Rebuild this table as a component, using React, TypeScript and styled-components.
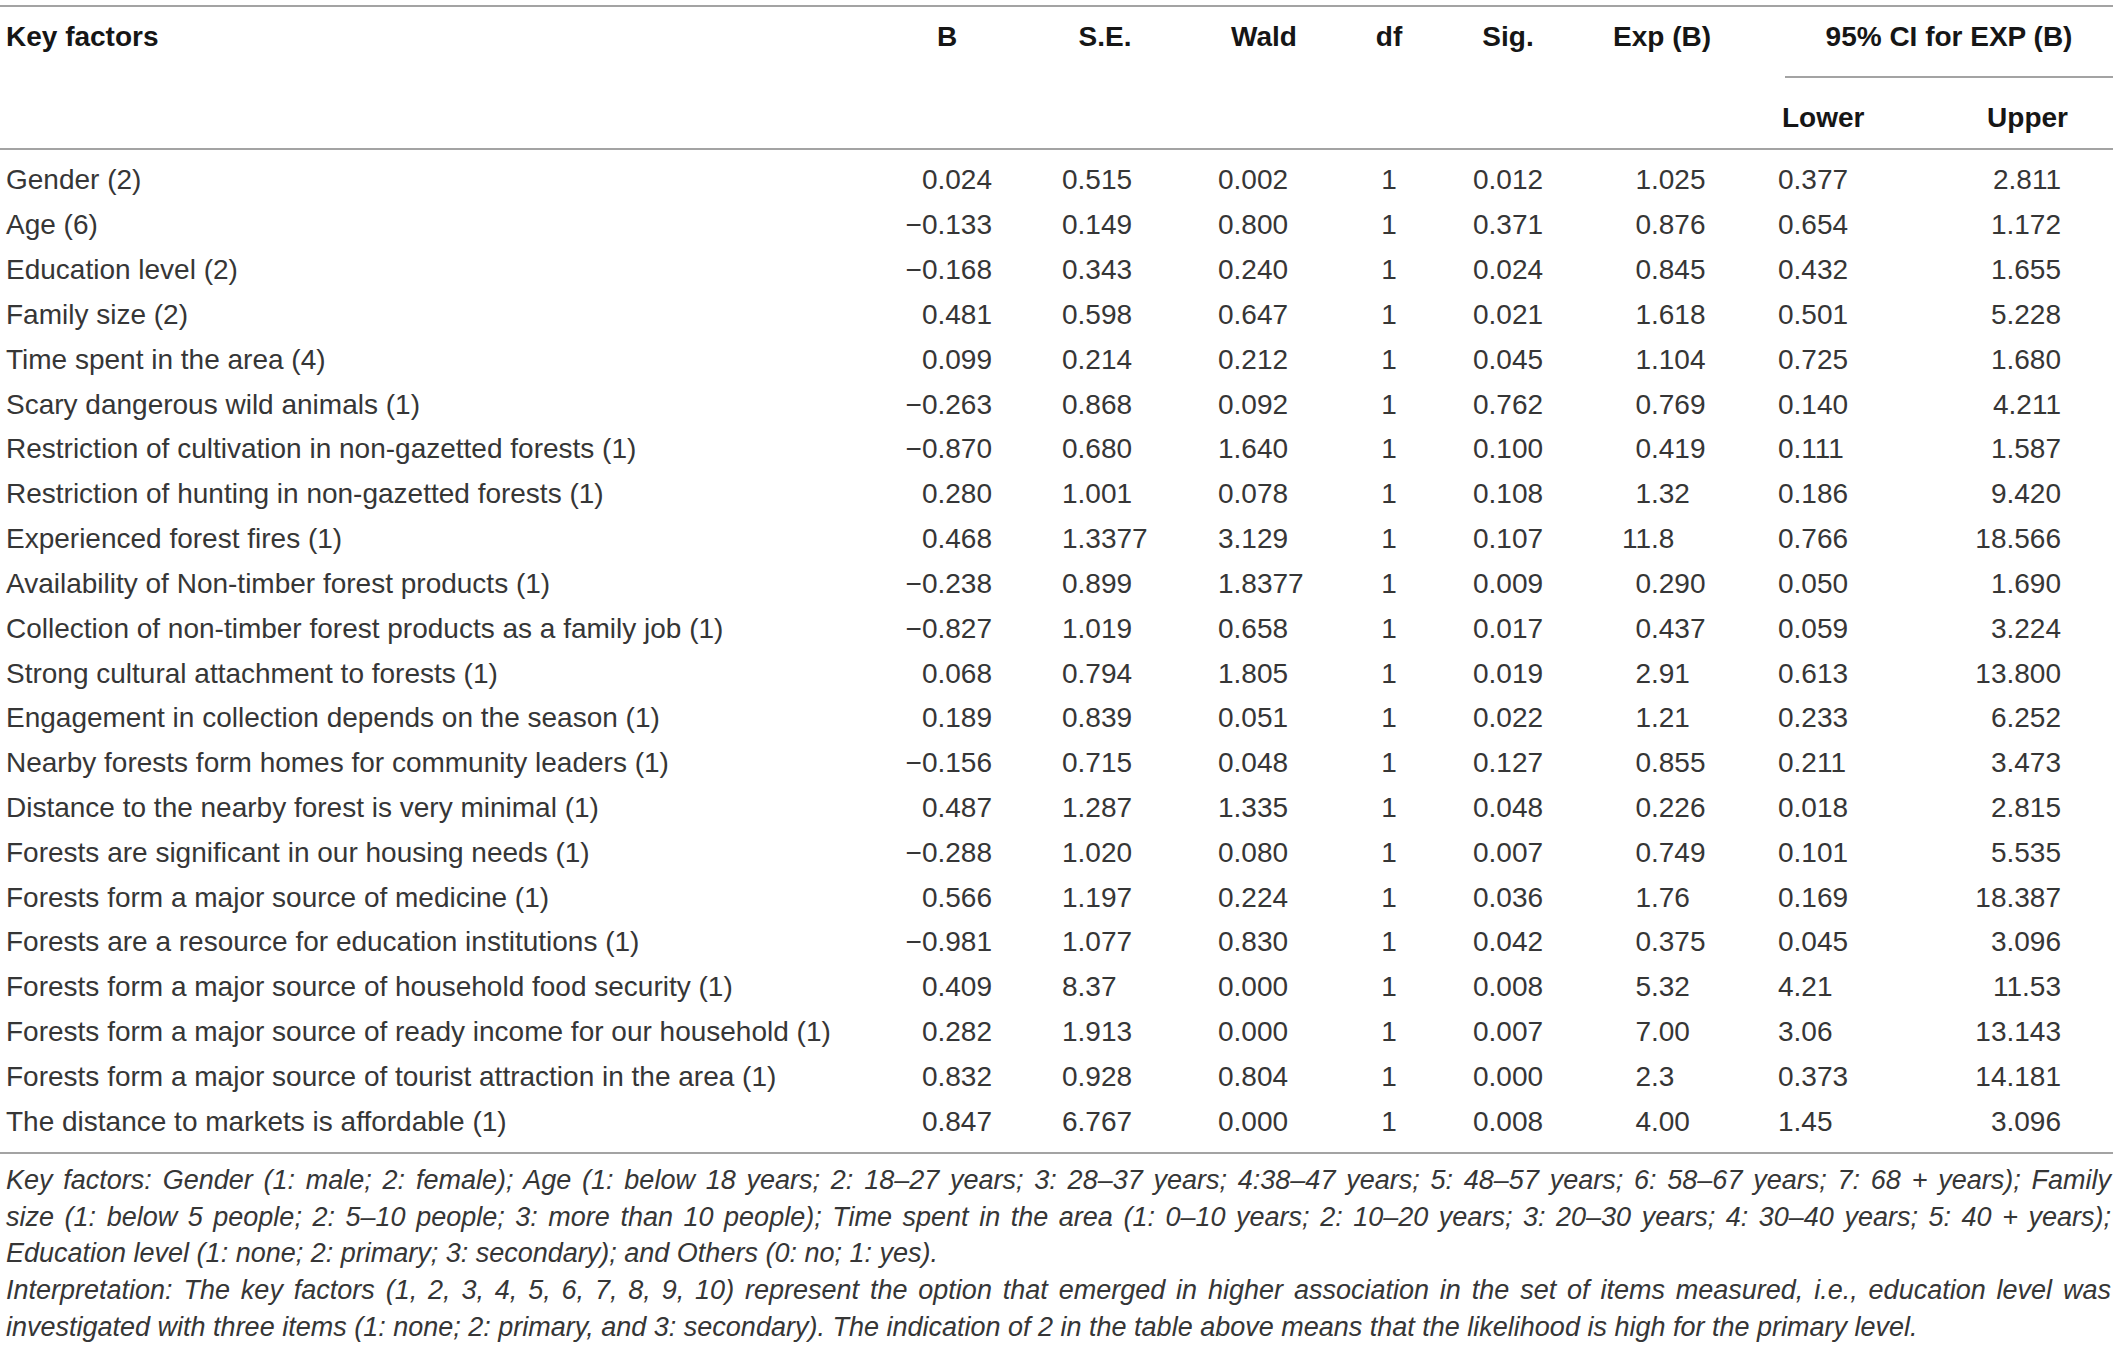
import styled, { createGlobalStyle } from 'styled-components';

const ruleColor = '#a3a3a3';

const GlobalStyle = createGlobalStyle`
  html, body {
    margin: 0;
    padding: 0;
    background: #ffffff;
  }
  body {
    font-family: 'Liberation Sans', Arial, sans-serif;
    color: #363636;
  }
`;

type Align = 'left' | 'right' | 'center' | 'decimal';

interface Column {
  width: number;
  align: Align;
  padL?: number;
  padR?: number;
  head?: string;
  headAlign?: 'left' | 'right' | 'center';
  headPadL?: number;
  headPadR?: number;
}

const columns: Column[] = [
  { width: 870, align: 'left', padL: 6, head: 'Key factors', headAlign: 'left', headPadL: 6 },
  { width: 154, align: 'right', padR: 32, head: 'B' },
  { width: 162, align: 'left', padL: 38, head: 'S.E.' },
  { width: 156, align: 'left', padL: 32, head: 'Wald' },
  { width: 94, align: 'center', head: 'df' },
  { width: 144, align: 'left', padL: 37, head: 'Sig.' },
  { width: 164, align: 'decimal', head: 'Exp (B)' },
  { width: 160, align: 'left', padL: 34 },
  { width: 209, align: 'right', padR: 52 },
];

const rows: string[][] = [
  ['Gender (2)', '0.024', '0.515', '0.002', '1', '0.012', '1.025', '0.377', '2.811'],
  ['Age (6)', '−0.133', '0.149', '0.800', '1', '0.371', '0.876', '0.654', '1.172'],
  ['Education level (2)', '−0.168', '0.343', '0.240', '1', '0.024', '0.845', '0.432', '1.655'],
  ['Family size (2)', '0.481', '0.598', '0.647', '1', '0.021', '1.618', '0.501', '5.228'],
  ['Time spent in the area (4)', '0.099', '0.214', '0.212', '1', '0.045', '1.104', '0.725', '1.680'],
  ['Scary dangerous wild animals (1)', '−0.263', '0.868', '0.092', '1', '0.762', '0.769', '0.140', '4.211'],
  ['Restriction of cultivation in non-gazetted forests (1)', '−0.870', '0.680', '1.640', '1', '0.100', '0.419', '0.111', '1.587'],
  ['Restriction of hunting in non-gazetted forests (1)', '0.280', '1.001', '0.078', '1', '0.108', '1.32', '0.186', '9.420'],
  ['Experienced forest fires (1)', '0.468', '1.3377', '3.129', '1', '0.107', '11.8', '0.766', '18.566'],
  ['Availability of Non-timber forest products (1)', '−0.238', '0.899', '1.8377', '1', '0.009', '0.290', '0.050', '1.690'],
  ['Collection of non-timber forest products as a family job (1)', '−0.827', '1.019', '0.658', '1', '0.017', '0.437', '0.059', '3.224'],
  ['Strong cultural attachment to forests (1)', '0.068', '0.794', '1.805', '1', '0.019', '2.91', '0.613', '13.800'],
  ['Engagement in collection depends on the season (1)', '0.189', '0.839', '0.051', '1', '0.022', '1.21', '0.233', '6.252'],
  ['Nearby forests form homes for community leaders (1)', '−0.156', '0.715', '0.048', '1', '0.127', '0.855', '0.211', '3.473'],
  ['Distance to the nearby forest is very minimal (1)', '0.487', '1.287', '1.335', '1', '0.048', '0.226', '0.018', '2.815'],
  ['Forests are significant in our housing needs (1)', '−0.288', '1.020', '0.080', '1', '0.007', '0.749', '0.101', '5.535'],
  ['Forests form a major source of medicine (1)', '0.566', '1.197', '0.224', '1', '0.036', '1.76', '0.169', '18.387'],
  ['Forests are a resource for education institutions (1)', '−0.981', '1.077', '0.830', '1', '0.042', '0.375', '0.045', '3.096'],
  ['Forests form a major source of household food security (1)', '0.409', '8.37', '0.000', '1', '0.008', '5.32', '4.21', '11.53'],
  ['Forests form a major source of ready income for our household (1)', '0.282', '1.913', '0.000', '1', '0.007', '7.00', '3.06', '13.143'],
  ['Forests form a major source of tourist attraction in the area (1)', '0.832', '0.928', '0.804', '1', '0.000', '2.3', '0.373', '14.181'],
  ['The distance to markets is affordable (1)', '0.847', '6.767', '0.000', '1', '0.008', '4.00', '1.45', '3.096'],
];

const notes: { text: string; last?: boolean }[] = [
  {
    text: 'Key factors: Gender (1: male; 2: female); Age (1: below 18 years; 2: 18–27 years; 3: 28–37 years; 4:38–47 years; 5: 48–57 years; 6: 58–67 years; 7: 68 + years); Family',
  },
  {
    text: 'size (1: below 5 people; 2: 5–10 people; 3: more than 10 people); Time spent in the area (1: 0–10 years; 2: 10–20 years; 3: 20–30 years; 4: 30–40 years; 5: 40 + years);',
  },
  { text: 'Education level (1: none; 2: primary; 3: secondary); and Others (0: no; 1: yes).', last: true },
  {
    text: 'Interpretation: The key factors (1, 2, 3, 4, 5, 6, 7, 8, 9, 10) represent the option that emerged in higher association in the set of items measured, i.e., education level was',
  },
  {
    text: 'investigated with three items (1: none; 2: primary, and 3: secondary). The indication of 2 in the table above means that the likelihood is high for the primary level.',
    last: true,
  },
];

const Page = styled.div`
  width: 2113px;
  padding-top: 5px;
`;

const Table = styled.table`
  width: 2113px;
  table-layout: fixed;
  border-collapse: separate;
  border-spacing: 0;
  border-top: 2px solid ${ruleColor};
  border-bottom: 2px solid ${ruleColor};
  font-size: 28px;
`;

const HeadCell = styled.th<{ $align: string; $padL?: number; $padR?: number }>`
  vertical-align: top;
  padding: 14px ${p => p.$padR ?? 0}px 0 ${p => p.$padL ?? 0}px;
  line-height: 32px;
  font-weight: 700;
  color: #161616;
  text-align: ${p => p.$align};
  white-space: nowrap;
  border-bottom: 2px solid ${ruleColor};
`;

const SubHeadCell = styled(HeadCell)`
  padding-top: 24px;
  padding-bottom: 14px;
`;

const SpanHeadCell = styled.th`
  vertical-align: top;
  padding: 0 0 0 41px;
  font-weight: 700;
  color: #161616;
  white-space: nowrap;
`;

const SpanTitle = styled.div`
  padding: 14px 0 23px;
  line-height: 32px;
  text-align: center;
  border-bottom: 2px solid ${ruleColor};
`;

const BodyRow = styled.tr`
  &:first-child td {
    height: 52.84px;
    padding-top: 8px;
  }
  &:last-child td {
    height: 52.84px;
    padding-bottom: 8px;
  }
`;

const BodyCell = styled.td<{ $align: string; $padL?: number; $padR?: number }>`
  box-sizing: border-box;
  height: 44.84px;
  padding: 0 ${p => p.$padR ?? 0}px 0 ${p => p.$padL ?? 0}px;
  vertical-align: middle;
  line-height: 32px;
  text-align: ${p => (p.$align === 'decimal' ? 'left' : p.$align)};
  white-space: nowrap;
`;

const IntPart = styled.span`
  display: inline-block;
  width: 71px;
  text-align: right;
`;

const Notes = styled.div`
  margin-top: 8px;
  padding: 0 2px 0 6px;
  font-size: 27px;
  font-style: italic;
  line-height: 36.6px;
`;

const NoteLine = styled.div<{ $last?: boolean }>`
  text-align: ${p => (p.$last ? 'left' : 'justify')};
  text-align-last: ${p => (p.$last ? 'left' : 'justify')};
`;

const renderValue = (value: string, align: Align) => {
  if (align !== 'decimal') return value;
  const dot = value.indexOf('.');
  return (
    <>
      <IntPart>{value.slice(0, dot)}</IntPart>
      {value.slice(dot)}
    </>
  );
};

export default function App() {
  return (
    <Page>
      <GlobalStyle />
      <Table>
        <colgroup>
          {columns.map((c, i) => (
            <col key={i} style={{ width: c.width }} />
          ))}
        </colgroup>
        <thead>
          <tr>
            {columns.slice(0, 7).map(c => (
              <HeadCell
                key={c.head}
                rowSpan={2}
                $align={c.headAlign ?? 'center'}
                $padL={c.headPadL}
                $padR={c.headPadR}
              >
                {c.head}
              </HeadCell>
            ))}
            <SpanHeadCell colSpan={2}>
              <SpanTitle>95% CI for EXP (B)</SpanTitle>
            </SpanHeadCell>
          </tr>
          <tr>
            <SubHeadCell $align='left' $padL={38}>
              Lower
            </SubHeadCell>
            <SubHeadCell $align='right' $padR={45}>
              Upper
            </SubHeadCell>
          </tr>
        </thead>
        <tbody>
          {rows.map(row => (
            <BodyRow key={row[0]}>
              {row.map((value, i) => {
                const c = columns[i];
                return (
                  <BodyCell key={i} $align={c.align} $padL={c.padL} $padR={c.padR}>
                    {renderValue(value, c.align)}
                  </BodyCell>
                );
              })}
            </BodyRow>
          ))}
        </tbody>
      </Table>
      <Notes>
        {notes.map((n, i) => (
          <NoteLine key={i} $last={n.last}>
            {n.text}
          </NoteLine>
        ))}
      </Notes>
    </Page>
  );
}
